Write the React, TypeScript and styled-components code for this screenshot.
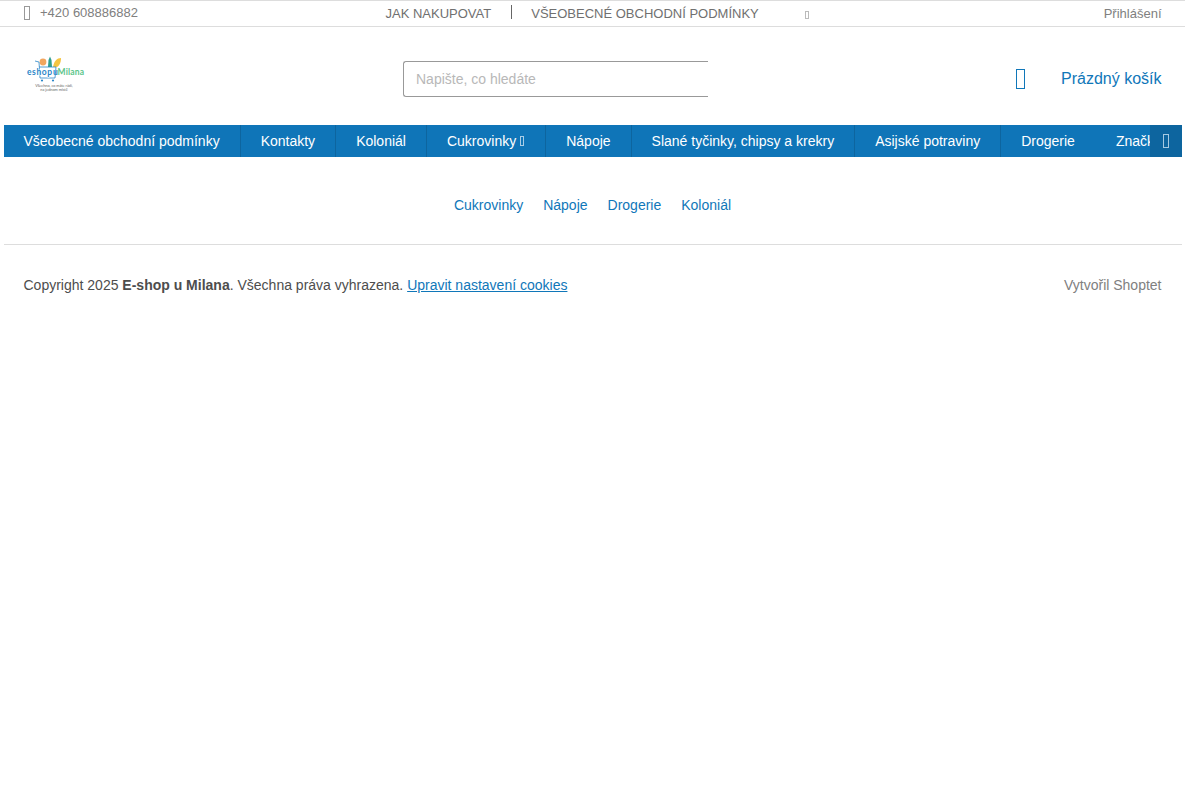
import React from "react";
import styled, { createGlobalStyle } from "styled-components";

const GlobalStyle = createGlobalStyle`
  html, body {
    margin: 0;
    padding: 0;
    background: #fff;
  }
  body {
    font-family: "Liberation Sans", Arial, sans-serif;
    font-size: 14px;
    color: #4d4d4d;
  }
`;

const Page = styled.div`
  width: 1185px;
`;

const TopBar = styled.div`
  display: flex;
  align-items: center;
  height: 25px;
  padding: 0 23.5px;
  border-top: 1px solid #ddd;
  border-bottom: 1px solid #ddd;
  font-size: 13px;
  color: #808080;
`;

// the icon font of the original never loaded, so its icons show as empty boxes
const MissingIcon = styled.span<{ $w: number; $h: number; $color: string }>`
  display: inline-block;
  flex: none;
  box-sizing: border-box;
  width: ${(p) => p.$w}px;
  height: ${(p) => p.$h}px;
  border: 1px solid ${(p) => p.$color};
`;

const Phone = styled.div`
  display: flex;
  align-items: center;
  gap: 10.5px;
  width: 362px;
  margin-top: -2px;
`;

const TopLinks = styled.div`
  display: flex;
  align-items: center;
`;

const TopLink = styled.a`
  color: #707070;
`;

const TopDivider = styled.span`
  width: 1px;
  height: 14px;
  margin: -4px 19.5px 0;
  background: #666;
`;

const LangIcon = styled.span`
  display: flex;
  margin: 2px 0 0 46px;
`;

const Login = styled.a`
  margin-left: auto;
  color: #808080;
`;

const Header = styled.header`
  display: flex;
  align-items: center;
  box-sizing: border-box;
  height: 98px;
  padding: 6px 23.5px 0 27px;
`;

const Logo = styled.svg`
  display: block;
  align-self: flex-start;
  flex: none;
  width: 58px;
  height: 38px;
  margin-top: 22px;
`;

const Search = styled.div`
  display: flex;
  align-items: center;
  box-sizing: border-box;
  width: 305px;
  height: 36px;
  margin-left: 318px;
  padding-left: 12px;
  border: 1px solid #999;
  border-right: 0;
  border-radius: 3px 0 0 3px;
  color: #b8b8b8;
`;

const Cart = styled.a`
  display: flex;
  align-items: center;
  gap: 36px;
  margin-left: auto;
  font-size: 16px;
  color: #1077b9;
`;

const Nav = styled.nav`
  position: relative;
  display: flex;
  height: 32px;
  margin: 0 3.5px;
  overflow: hidden;
  background: #0f75b8;
  white-space: nowrap;
`;

const NavItem = styled.a<{ $plain: boolean }>`
  display: flex;
  align-items: center;
  flex: none;
  padding: 0 20px;
  color: #fff;
  border-right: 1px solid ${(p) => (p.$plain ? "transparent" : "#0d659f")};
`;

const NavCaret = styled.span`
  display: flex;
  margin: 0 1px 0 4px;
`;

const NavToggle = styled.span`
  position: absolute;
  top: 0;
  right: 0;
  display: flex;
  align-items: center;
  justify-content: center;
  width: 32px;
  height: 32px;
  background: #0d659f;
`;

const FooterLinks = styled.div`
  display: flex;
  justify-content: center;
  gap: 20px;
  margin: 0 3.5px;
  padding: 40px 0 31px;
  border-bottom: 1px solid #ddd;
`;

const BlueLink = styled.a`
  color: #1077b9;
  line-height: 16px;
`;

const Copy = styled.div`
  display: flex;
  justify-content: space-between;
  padding: 32px 23.5px 0;
  line-height: 16px;
`;

const CopyLink = styled.a`
  color: #1077b9;
  text-decoration: underline;
`;

const Credit = styled.a`
  color: #808080;
`;

const navItems = [
  "Všeobecné obchodní podmínky",
  "Kontakty",
  "Koloniál",
  "Cukrovinky",
  "Nápoje",
  "Slané tyčinky, chipsy a krekry",
  "Asijské potraviny",
  "Drogerie",
  "Značky",
];

const footerLinks = ["Cukrovinky", "Nápoje", "Drogerie", "Koloniál"];

function ShopLogo() {
  return (
    <Logo viewBox="0 0 58 38">
      <circle cx="16" cy="7" r="3.4" fill="#f2a65e" />
      <path d="M21 12 L21.5 5 L23 1.5 L24.5 5 L25 12 Z" fill="#2f9e8f" />
      <path d="M26 12 C27 6 30 3 34 3 C34 8 32 11 30 12 Z" fill="#f4c542" />
      <path
        d="M8 6 L12 7 L13 23 L28 23 L29 12 L12 12"
        fill="none"
        stroke="#2a86c8"
        strokeWidth="0.8"
      />
      <circle cx="15" cy="25.5" r="1.1" fill="#2a86c8" />
      <circle cx="26" cy="25.5" r="1.1" fill="#2a86c8" />
      <text
        x="0"
        y="20"
        fontSize="8.5"
        fontWeight="700"
        fill="#2a86c8"
        stroke="#fff"
        strokeWidth="1"
        paintOrder="stroke"
        fontFamily="Lato, sans-serif"
        textLength="25"
      >
        eshop
      </text>
      <text x="26" y="20" fontSize="8.5" fontWeight="700" fill="#2a86c8" fontFamily="Lato, sans-serif">
        u
      </text>
      <text x="30.5" y="20" fontSize="8.5" fontWeight="700" fill="#5bc58a" fontFamily="Lato, sans-serif" textLength="26.5">
        Milana
      </text>
      <text x="27" y="31.5" fontSize="3.8" textAnchor="middle" fill="#666" fontFamily="Lato, sans-serif">
        Všechno, co máte rádi,
      </text>
      <text x="27" y="35.8" fontSize="3.8" textAnchor="middle" fill="#666" fontFamily="Lato, sans-serif">
        na jednom místě
      </text>
    </Logo>
  );
}

export default function App() {
  return (
    <Page>
      <GlobalStyle />
      <TopBar>
        <Phone>
          <MissingIcon $w={6} $h={14} $color="#999" />
          +420 608886882
        </Phone>
        <TopLinks>
          <TopLink>JAK NAKUPOVAT</TopLink>
          <TopDivider />
          <TopLink>VŠEOBECNÉ OBCHODNÍ PODMÍNKY</TopLink>
          <LangIcon>
            <MissingIcon $w={4} $h={8} $color="#bbb" />
          </LangIcon>
        </TopLinks>
        <Login>Přihlášení</Login>
      </TopBar>
      <Header>
        <ShopLogo />
        <Search>Napište, co hledáte</Search>
        <Cart>
          <MissingIcon $w={9} $h={20} $color="#1077b9" />
          Prázdný košík
        </Cart>
      </Header>
      <Nav>
        {navItems.map((item, i) => (
          <NavItem key={item} $plain={i >= navItems.length - 2}>
            {item}
            {item === "Cukrovinky" && (
              <NavCaret>
                <MissingIcon $w={4} $h={10} $color="#a9cde6" />
              </NavCaret>
            )}
          </NavItem>
        ))}
        <NavToggle>
          <MissingIcon $w={6} $h={14} $color="#a5c9e2" />
        </NavToggle>
      </Nav>
      <FooterLinks>
        {footerLinks.map((item) => (
          <BlueLink key={item}>{item}</BlueLink>
        ))}
      </FooterLinks>
      <Copy>
        <span>
          Copyright 2025 <strong>E-shop u Milana</strong>. Všechna práva vyhrazena.{" "}
          <CopyLink>Upravit nastavení cookies</CopyLink>
        </span>
        <Credit>Vytvořil Shoptet</Credit>
      </Copy>
    </Page>
  );
}
